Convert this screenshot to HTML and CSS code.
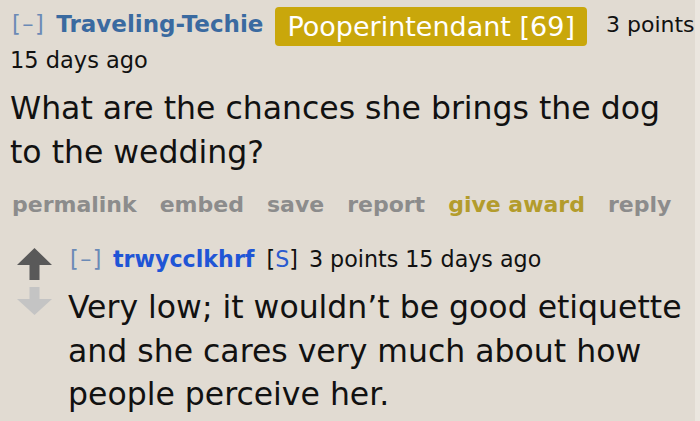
FILE: index.html
```html
<!DOCTYPE html>
<html>
<head>
<meta charset="utf-8">
<link rel="stylesheet" href="styles.css">
</head>
<body>
<div class="page">
  <div class="comment">
    <div class="tagline">
      <span class="toggle">[–]</span>
      <span class="author">Traveling-Techie</span>
      <span class="flair">Pooperintendant [69]</span>
      <span class="score">3 points</span>
    </div>
    <div class="time">15 days ago</div>
    <div class="body">What are the chances she brings the dog to the wedding?</div>
    <div class="buttons">
      <span>permalink</span>
      <span>embed</span>
      <span>save</span>
      <span>report</span>
      <span class="award">give award</span>
      <span>reply</span>
    </div>
  </div>
  <div class="child">
    <div class="votes">
      <svg class="arrow" width="35" height="32" viewBox="0 0 35 32"><path d="M17.5 0 L35 17 L22.5 17 L22.5 32 L12.5 32 L12.5 17 L0 17 Z" fill="#595959"/></svg>
      <svg class="arrow" width="35" height="28" viewBox="0 0 35 28"><path d="M12.5 0 L22.5 0 L22.5 12 L35 12 L17.5 28 L0 12 L12.5 12 Z" fill="#c4c4c4"/></svg>
    </div>
    <div class="reply">
      <div class="tagline2">
        <span class="toggle2">[–]</span>
        <span class="author2">trwycclkhrf</span>
        <span class="sub">[<span class="s">S</span>]</span>
        <span>3 points 15 days ago</span>
      </div>
      <div class="body2">Very low; it wouldn’t be good etiquette and she cares very much about how people perceive her.</div>
    </div>
  </div>
</div>
</body>
</html>
```
FILE: styles.css
```css
html, body {
  margin: 0;
  padding: 0;
  background: #ebe6df;
}
.page {
  width: 695px;
  height: 421px;
  background: #e1dbd2;
  font-family: "DejaVu Sans", Verdana, sans-serif;
  color: #111;
  box-sizing: border-box;
  padding: 0 0 0 10px;
  overflow: hidden;
}
.tagline {
  display: flex;
  align-items: flex-start;
  height: 46px;
  font-size: 22.5px;
  line-height: 27px;
  white-space: nowrap;
}
.toggle {
  color: #6b8ab6;
  margin-left: 2px;
  margin-top: 11px;
  letter-spacing: 1.5px;
}
.author {
  color: #3a6aa0;
  font-weight: bold;
  font-size: 23px;
  margin-left: 11px;
  margin-top: 11px;
}
.flair {
  background: #c9a70b;
  color: #fff;
  font-size: 27px;
  line-height: 31px;
  border-radius: 4px;
  height: 39px;
  margin-top: 7px;
  display: flex;
  align-items: center;
  padding: 0 12px;
  margin-left: 12px;
  margin-right: 19px;
}
.score {
  margin-top: 11px;
  font-size: 22px;
}
.time {
  font-size: 22.5px;
  line-height: 27px;
  margin-top: 1px;
}
.body {
  font-size: 31.5px;
  line-height: 44px;
  margin-top: 12px;
  width: 670px;
}
.buttons {
  display: flex;
  gap: 23px;
  font-size: 22px;
  line-height: 27px;
  font-weight: bold;
  color: #8c8c8c;
  margin-top: 17px;
  padding-left: 2px;
}
.award {
  color: #b39c2c;
}
.child {
  display: flex;
  margin-top: 28px;
}
.votes {
  display: flex;
  flex-direction: column;
  width: 58px;
  padding-left: 7px;
  padding-top: 2px;
  gap: 7px;
  box-sizing: border-box;
}
.tagline2 {
  font-size: 22.2px;
  line-height: 27px;
  display: flex;
  gap: 11px;
  white-space: nowrap;
}
.toggle2 {
  color: #6b8ab6;
  margin-left: 2px;
  letter-spacing: 1.5px;
}
.author2 {
  color: #1f55d6;
  font-weight: bold;
  font-size: 22.2px;
  margin-left: -1px;
}
.sub {
  margin-left: 1px;
}
.sub .s {
  color: #2a5bd0;
}
.body2 {
  font-size: 31.5px;
  line-height: 43.5px;
  margin-top: 13px;
  width: 625px;
}
```
